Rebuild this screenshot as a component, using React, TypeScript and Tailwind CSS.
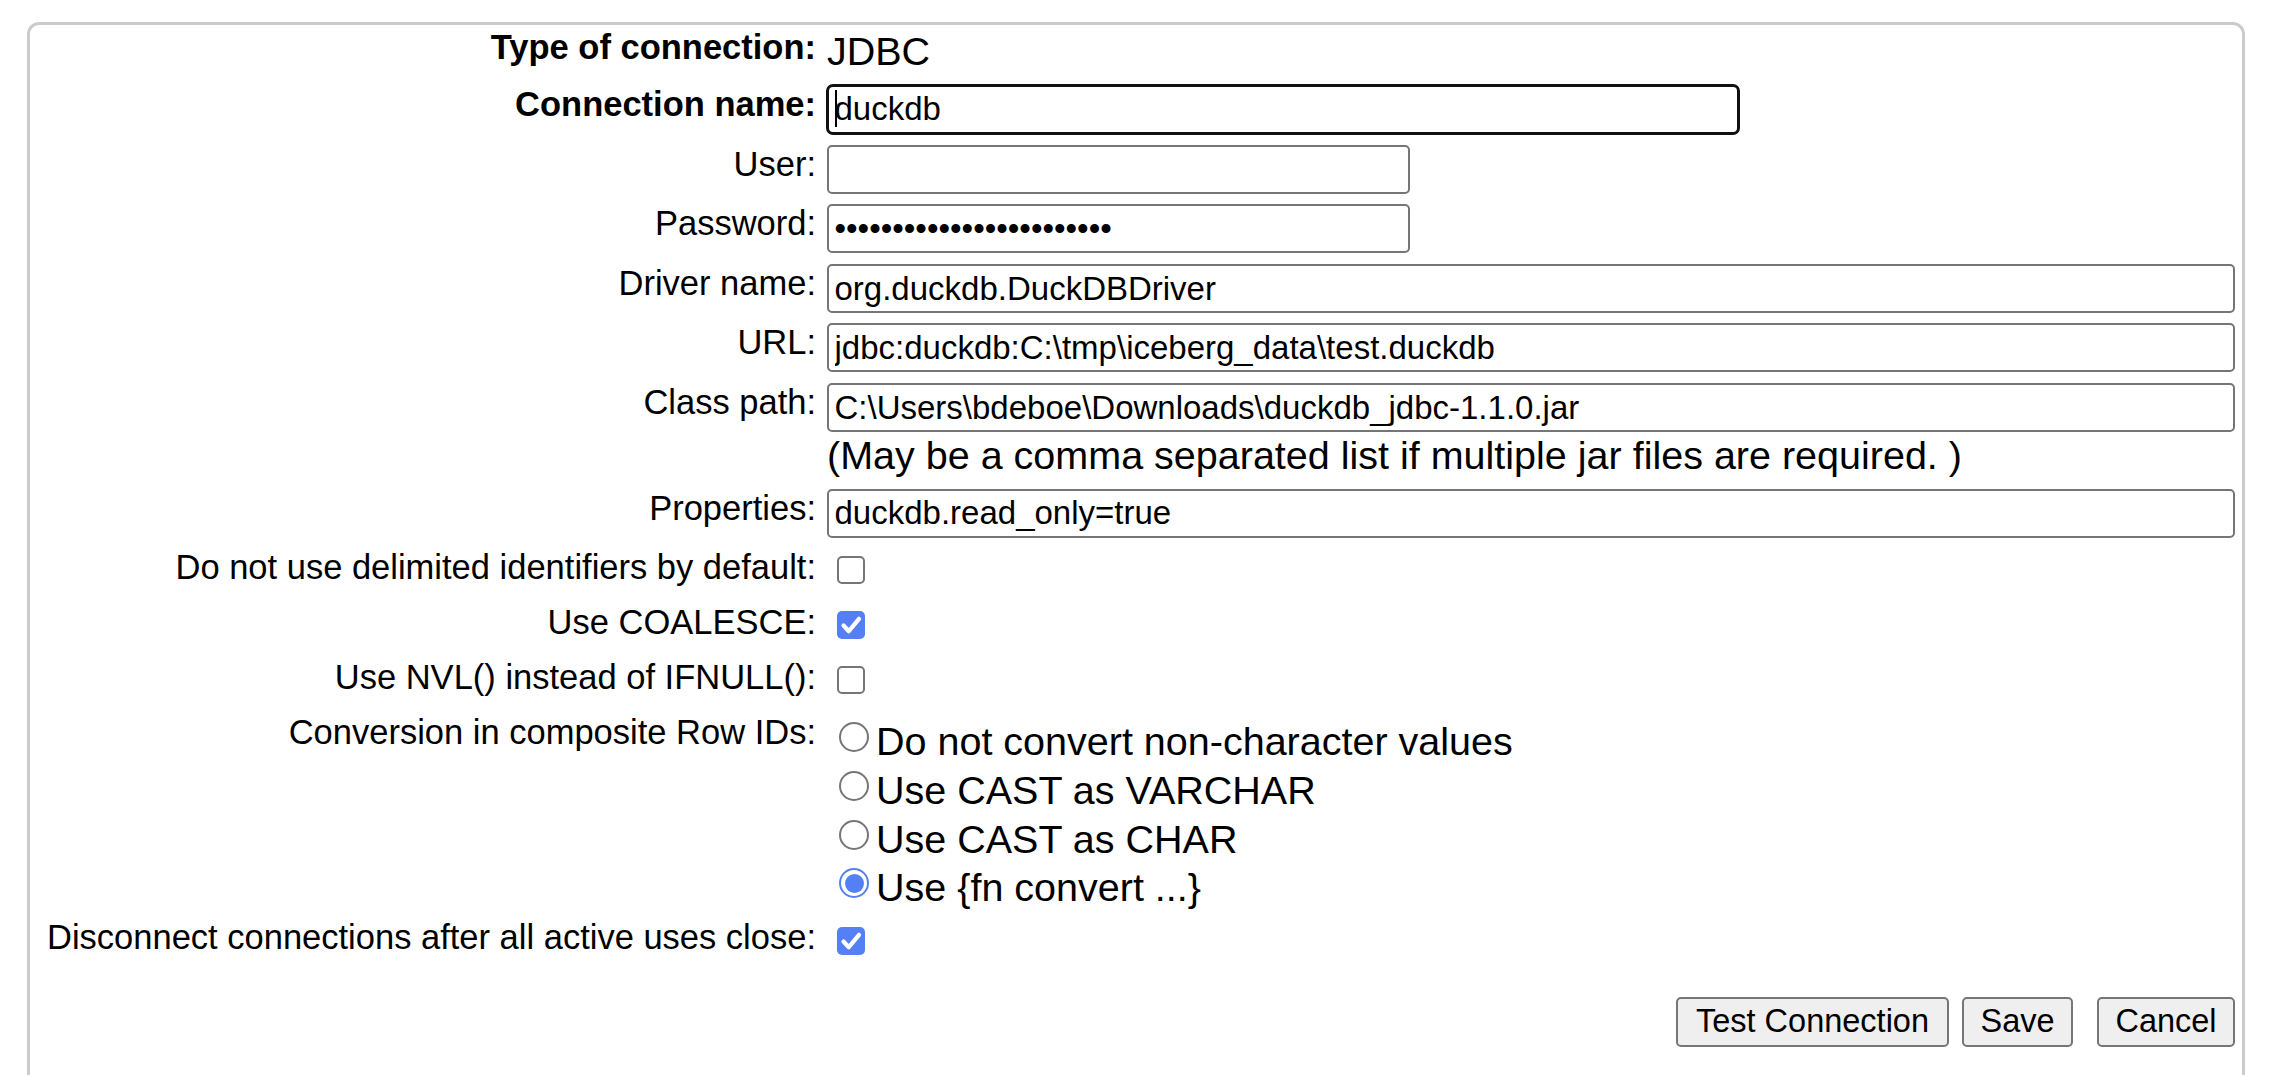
import React from "react";

const labelCls = "text-right text-[34.5px] leading-[39.6px] text-black whitespace-nowrap";
const inputBase =
  "h-[49px] rounded-[5px] bg-white px-[5.5px] text-[33px] text-black font-['Liberation_Sans',Arial,sans-serif]";
const inputCls = inputBase + " outline-none border-2 border-[#767676]";

function Checkbox({ checked }: { checked?: boolean }) {
  if (checked) {
    return (
      <span className="ml-[10px] inline-flex h-[28px] w-[28px] items-center justify-center rounded-[5px] bg-[#5580f5]">
        <svg width="28" height="28" viewBox="0 0 28 28">
          <path
            d="M6.5 14.5 L11.8 20.2 L22 7.8"
            fill="none"
            stroke="white"
            strokeWidth="4.2"
            strokeLinecap="round"
            strokeLinejoin="round"
          />
        </svg>
      </span>
    );
  }
  return (
    <span className="ml-[10px] inline-block h-[28px] w-[28px] rounded-[5px] border-[2.5px] border-[#767676] bg-white" />
  );
}

function Radio({ checked, label }: { checked?: boolean; label: string }) {
  return (
    <div className="flex h-[48.67px] items-center">
      {checked ? (
        <span className="ml-[12px] mr-[7px] flex h-[30px] w-[30px] shrink-0 items-center justify-center rounded-full border-[2.5px] border-[#5580f5] bg-white">
          <span className="h-[19px] w-[19px] rounded-full bg-[#5580f5]" />
        </span>
      ) : (
        <span className="ml-[12px] mr-[7px] h-[30px] w-[30px] shrink-0 rounded-full border-[2.5px] border-[#767676] bg-white" />
      )}
      <span className="mt-[8px] whitespace-nowrap text-[39.5px] leading-[46px] text-black">{label}</span>
    </div>
  );
}

function Row({
  label,
  bold,
  children,
}: {
  label: string;
  bold?: boolean;
  children: React.ReactNode;
}) {
  return (
    <div className="grid grid-cols-[786px_1fr] gap-x-[11px]">
      <div className={labelCls + (bold ? " font-bold" : "")}>{label}</div>
      <div>{children}</div>
    </div>
  );
}

function CheckRow({ label, checked }: { label: string; checked?: boolean }) {
  return (
    <Row label={label}>
      <div className="flex h-[44.4px] items-center">
        <Checkbox checked={checked} />
      </div>
    </Row>
  );
}

function Btn({ children, className }: { children: React.ReactNode; className?: string }) {
  return (
    <button
      type="button"
      className={
        "flex h-[50px] items-center justify-center rounded-[5px] border-2 border-[#767676] bg-[#efefef] text-[32.5px] text-black font-['Liberation_Sans',Arial,sans-serif] " +
        (className || "")
      }
    >
      {children}
    </button>
  );
}

export default function App() {
  return (
    <div className="h-[1075px] w-full overflow-hidden bg-white font-['Liberation_Sans',Arial,sans-serif]">
      <div className="ml-[27px] mt-[22px] h-[1200px] w-[2218px] rounded-[12px] border-[3px] border-[#cbcbcb]">
        <div className="flex flex-col gap-[10.6px] pr-[7px] pt-[3.4px]">
          <Row label="Type of connection:" bold>
            <div className="text-[39.5px] leading-[46px] text-black">JDBC</div>
          </Row>
          <Row label="Connection name:" bold>
            <div className="relative -my-[1px] -ml-[1px] w-[914px]">
              <input
                className={inputBase + " h-[51px] w-[914px] rounded-[7px] border-[3px] border-[#111] outline-none"}
                defaultValue="duckdb"
                readOnly
              />
              <span className="absolute left-[9px] top-[6px] h-[37px] w-[1.5px] bg-black" />
            </div>
          </Row>
          <Row label="User:">
            <input className={inputCls + " w-[583px]"} defaultValue="" readOnly />
          </Row>
          <Row label="Password:">
            <input className={inputCls + " w-[583px]"} type="password" defaultValue="aaaaaaaaaaaaaaaaaaaaaaaa" readOnly />
          </Row>
          <Row label="Driver name:">
            <input className={inputCls + " w-full"} defaultValue="org.duckdb.DuckDBDriver" readOnly />
          </Row>
          <Row label="URL:">
            <input className={inputCls + " w-full"} defaultValue="jdbc:duckdb:C:\tmp\iceberg_data\test.duckdb" readOnly />
          </Row>
          <Row label="Class path:">
            <input className={inputCls + " w-full"} defaultValue="C:\Users\bdeboe\Downloads\duckdb_jdbc-1.1.0.jar" readOnly />
            <div className="whitespace-nowrap text-[39.5px] leading-[46px] text-black">
              (May be a comma separated list if multiple jar files are required. )
            </div>
          </Row>
          <Row label="Properties:">
            <input className={inputCls + " w-full"} defaultValue="duckdb.read_only=true" readOnly />
          </Row>
          <CheckRow label="Do not use delimited identifiers by default:" />
          <CheckRow label="Use COALESCE:" checked />
          <CheckRow label="Use NVL() instead of IFNULL():" />
          <Row label="Conversion in composite Row IDs:">
            <div className="flex flex-col">
              <Radio label="Do not convert non-character values" />
              <Radio label="Use CAST as VARCHAR" />
              <Radio label="Use CAST as CHAR" />
              <Radio label="Use {fn convert ...}" checked />
            </div>
          </Row>
          <CheckRow label="Disconnect connections after all active uses close:" checked />
          <Row label="">
            <div className="mt-[23.5px] flex justify-end">
              <Btn className="w-[273px]">Test Connection</Btn>
              <Btn className="ml-[13px] w-[111px]">Save</Btn>
              <Btn className="ml-[24px] w-[138px]">Cancel</Btn>
            </div>
          </Row>
        </div>
      </div>
    </div>
  );
}
